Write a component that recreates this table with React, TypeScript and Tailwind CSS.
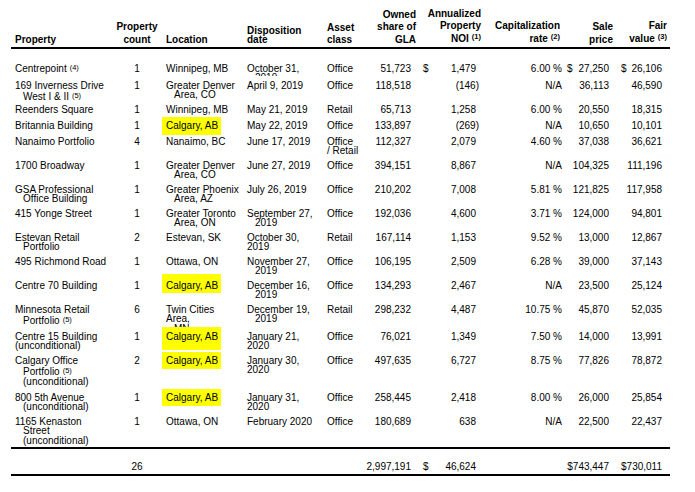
import clsx from "clsx";

type Row = {
  h: string;
  name: string[];
  count: string;
  loc: string[];
  locCls?: string;
  hl?: string;
  date: string[];
  dateCls?: string;
  asset: string[];
  gla: string;
  noi: string;
  cap: string;
  sale: string;
  fair: string;
  dollars?: boolean;
};

const COLS =
  "grid grid-cols-[101px_50px_81px_80px_42px_51px_16px_49px_81px_51px_57px]";

const rows: Row[] = [
  { h: "h-[17px]", name: ["Centrepoint^(4)"], count: "1", loc: ["Winnipeg, MB"], date: ["October 31,", ">2019"], dateCls: "h-[12px] overflow-hidden", asset: ["Office"], gla: "51,723", noi: "1,479", cap: "6.00 %", sale: "27,250", fair: "26,106", dollars: true },
  { h: "h-[24px]", name: ["169 Inverness Drive", ">West I & II^(5)"], count: "1", loc: ["Greater Denver", ">Area, CO"], date: ["April 9, 2019"], asset: ["Office"], gla: "118,518", noi: "(146)", cap: "N/A", sale: "36,113", fair: "46,590" },
  { h: "h-[16px]", name: ["Reenders Square"], count: "1", loc: ["Winnipeg, MB"], date: ["May 21, 2019"], asset: ["Retail"], gla: "65,713", noi: "1,258", cap: "6.00 %", sale: "20,550", fair: "18,315" },
  { h: "h-[16px]", name: ["Britannia Building"], count: "1", loc: ["Calgary, AB"], hl: "-mt-[4px] pt-[4px] pb-[4.6px]", date: ["May 22, 2019"], asset: ["Office"], gla: "133,897", noi: "(269)", cap: "N/A", sale: "10,650", fair: "10,101" },
  { h: "h-[24px]", name: ["Nanaimo Portfolio"], count: "4", loc: ["Nanaimo, BC"], date: ["June 17, 2019"], asset: ["Office", "/ Retail"], gla: "112,327", noi: "2,079", cap: "4.60 %", sale: "37,038", fair: "36,621" },
  { h: "h-[24px]", name: ["1700 Broadway"], count: "1", loc: ["Greater Denver", ">Area, CO"], date: ["June 27, 2019"], asset: ["Office"], gla: "394,151", noi: "8,867", cap: "N/A", sale: "104,325", fair: "111,196" },
  { h: "h-[24px]", name: ["GSA Professional", ">Office Building"], count: "1", loc: ["Greater Phoenix", ">Area, AZ"], date: ["July 26, 2019"], asset: ["Office"], gla: "210,202", noi: "7,008", cap: "5.81 %", sale: "121,825", fair: "117,958" },
  { h: "h-[24px]", name: ["415 Yonge Street"], count: "1", loc: ["Greater Toronto", ">Area, ON"], date: ["September 27,", ">2019"], asset: ["Office"], gla: "192,036", noi: "4,600", cap: "3.71 %", sale: "124,000", fair: "94,801" },
  { h: "h-[24px]", name: ["Estevan Retail", ">Portfolio"], count: "2", loc: ["Estevan, SK"], date: ["October 30,", "2019"], asset: ["Retail"], gla: "167,114", noi: "1,153", cap: "9.52 %", sale: "13,000", fair: "12,867" },
  { h: "h-[24px]", name: ["495 Richmond Road"], count: "1", loc: ["Ottawa, ON"], date: ["November 27,", ">2019"], asset: ["Office"], gla: "106,195", noi: "2,509", cap: "6.28 %", sale: "39,000", fair: "37,143" },
  { h: "h-[24px]", name: ["Centre 70 Building"], count: "1", loc: ["Calgary, AB"], hl: "-mt-[7px] pt-[7px] pb-[2.6px]", date: ["December 16,", ">2019"], asset: ["Office"], gla: "134,293", noi: "2,467", cap: "N/A", sale: "23,500", fair: "25,124" },
  { h: "h-[27px]", name: ["Minnesota Retail", ">Portfolio^(5)"], count: "6", loc: ["Twin Cities", "Area,", ">MN"], locCls: "h-[22px] overflow-hidden", date: ["December 19,", ">2019"], asset: ["Retail"], gla: "298,232", noi: "4,487", cap: "10.75 %", sale: "45,870", fair: "52,035" },
  { h: "h-[24px]", name: ["Centre 15 Building", "(unconditional)"], count: "1", loc: ["Calgary, AB"], hl: "-mt-[5px] pt-[5px] pb-[8.6px]", date: ["January 21,", "2020"], asset: ["Office"], gla: "76,021", noi: "1,349", cap: "7.50 %", sale: "14,000", fair: "13,991" },
  { h: "h-[37px]", name: ["Calgary Office", ">Portfolio^(5)", ">(unconditional)"], count: "2", loc: ["Calgary, AB"], hl: "-mt-[4px] pt-[4px] pb-[3.6px]", date: ["January 30,", "2020"], asset: ["Office"], gla: "497,635", noi: "6,727", cap: "8.75 %", sale: "77,826", fair: "78,872" },
  { h: "h-[24px]", name: ["800 5th Avenue", ">(unconditional)"], count: "1", loc: ["Calgary, AB"], hl: "-mt-[4px] pt-[4px] pb-[3.6px]", date: ["January 31,", "2020"], asset: ["Office"], gla: "258,445", noi: "2,418", cap: "8.00 %", sale: "26,000", fair: "25,854" },
  { h: "h-[30px]", name: ["1165 Kenaston", ">Street", ">(unconditional)"], count: "1", loc: ["Ottawa, ON"], date: ["February 2020"], asset: ["Office"], gla: "180,689", noi: "638", cap: "N/A", sale: "22,500", fair: "22,437" },
];

function Sup({ children }: { children: string }) {
  return <span className="relative -top-[2.5px] ml-[3px] text-[7.5px]">{children}</span>;
}

function Lines({ lines }: { lines: string[] }) {
  return (
    <>
      {lines.map((raw, k) => {
        const indent = raw.startsWith(">");
        const [txt, sup] = (indent ? raw.slice(1) : raw).split("^");
        return (
          <div
            key={k}
            className={clsx("whitespace-nowrap", indent && "pl-[8px]", sup && k > 0 && "mt-[1.6px]")}
          >
            {txt}
            {sup && <Sup>{sup}</Sup>}
          </div>
        );
      })}
    </>
  );
}

function Num({ v }: { v: string }) {
  // negative figures hang their closing paren past the column edge
  return v.startsWith("(") ? <span className="-mr-[3px]">{v}</span> : <span>{v}</span>;
}

export default function App() {
  return (
    <div className="w-[695px] h-[492px] overflow-hidden bg-white text-black font-['Liberation_Sans',Arial,sans-serif] text-[10px]">
      <div className="ml-[11px] w-[659px]">
        {/* header */}
        <div className={clsx(COLS, "h-[49px] border-b-2 border-black items-end pb-[1px] font-bold leading-[12.5px]")}>
          <div className="pl-[4px]">Property</div>
          <div className="text-center">
            <div>Property</div>
            <div>count</div>
          </div>
          <div className="pl-[4px]">Location</div>
          <div className="pl-[4px] pb-[2px] leading-[9px]">
            <div>Disposition</div>
            <div>date</div>
          </div>
          <div className="pl-[4px] leading-[12px]">
            <div>Asset</div>
            <div>class</div>
          </div>
          <div className="text-right">
            <div>Owned</div>
            <div>share of</div>
            <div>GLA</div>
          </div>
          <div className="col-span-2 text-right">
            <div>Annualized</div>
            <div>Property</div>
            <div>
              NOI<Sup>(1)</Sup>
            </div>
          </div>
          <div className="text-right pr-[2px]">
            <div>Capitalization</div>
            <div>
              rate<Sup>(2)</Sup>
            </div>
          </div>
          <div className="text-right">
            <div>Sale</div>
            <div>price</div>
          </div>
          <div className="text-right pr-[3px]">
            <div>Fair</div>
            <div>
              value<Sup>(3)</Sup>
            </div>
          </div>
        </div>

        {/* body */}
        <div className="pt-[15px] border-b-2 border-black leading-[9.4px]">
          {rows.map((r) => (
            <div key={r.name[0]} className={clsx(COLS, r.h)}>
              <div className="pl-[4px]">
                <Lines lines={r.name} />
              </div>
              <div className="text-center">{r.count}</div>
              <div className={clsx("pl-[4px]", r.locCls)}>
                {r.hl ? (
                  <div className={clsx("w-fit -ml-[4px] pl-[4px] pr-[3px] bg-[#ffff00]", r.hl)}>
                    <Lines lines={r.loc} />
                  </div>
                ) : (
                  <Lines lines={r.loc} />
                )}
              </div>
              <div className={clsx("pl-[4px]", r.dateCls)}>
                <Lines lines={r.date} />
              </div>
              <div className="pl-[4px]">
                <Lines lines={r.asset} />
              </div>
              <div className="text-right pr-[5px]">{r.gla}</div>
              <div className="pl-[7px]">{r.dollars ? "$" : ""}</div>
              <div className="text-right pr-[5px]">
                <Num v={r.noi} />
              </div>
              <div className="text-right">{r.cap}</div>
              <div className="flex justify-between pl-[5px] pr-[4px]">
                <span>{r.dollars ? "$" : ""}</span>
                <span>{r.sale}</span>
              </div>
              <div className="flex justify-between pl-[8px] pr-[8px]">
                <span>{r.dollars ? "$" : ""}</span>
                <span>{r.fair}</span>
              </div>
            </div>
          ))}
        </div>

        {/* total */}
        <div className={clsx(COLS, "h-[27px] pt-[13px] border-b-2 border-black leading-[9.4px]")}>
          <div />
          <div className="text-center">26</div>
          <div />
          <div />
          <div />
          <div className="text-right pr-[5px]">2,997,191</div>
          <div className="pl-[7px]">$</div>
          <div className="text-right pr-[5px]">46,624</div>
          <div />
          <div className="text-right pr-[4px]">$743,447</div>
          <div className="text-right pr-[8px]">$730,011</div>
        </div>
      </div>
    </div>
  );
}
